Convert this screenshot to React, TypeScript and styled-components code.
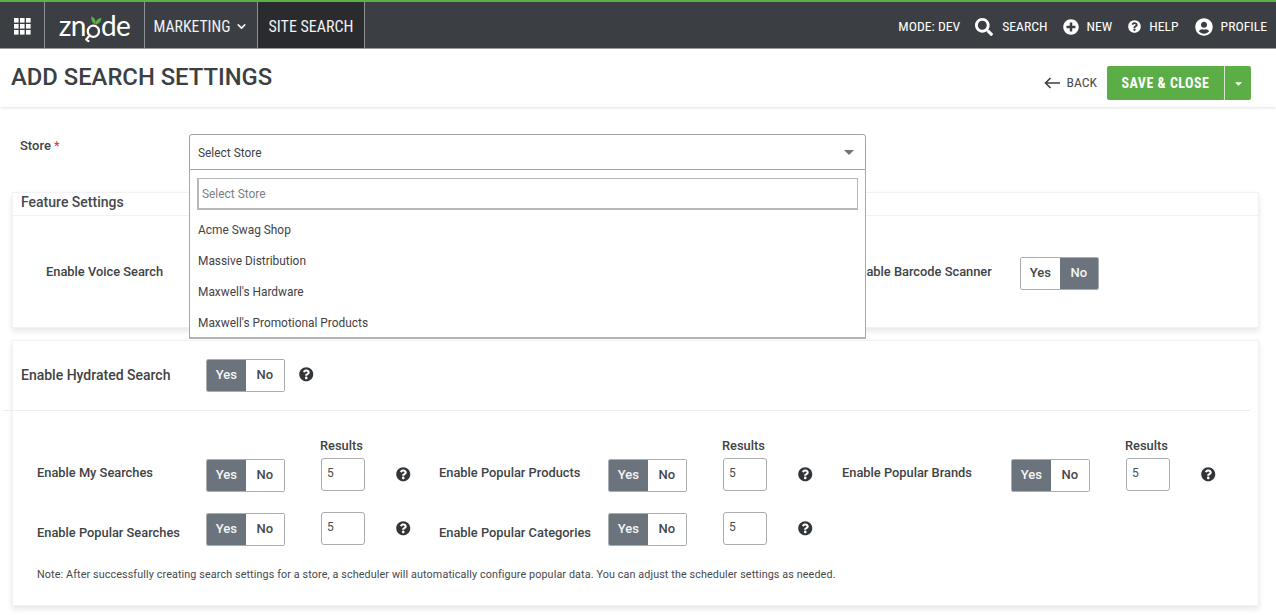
import React from "react";
import styled, { createGlobalStyle } from "styled-components";
import { FaSearch, FaPlusCircle, FaQuestionCircle, FaUserCircle, FaCaretDown } from "react-icons/fa";
import { FiChevronDown } from "react-icons/fi";

const Global = createGlobalStyle`
  html, body, #root { margin: 0; padding: 0; height: 100%; background: #fff; }
  body { font-family: Roboto, "Liberation Sans", sans-serif; color: #3c4043; overflow: hidden; }
  * { box-sizing: border-box; }
`;

const Nav = styled.header`
  display: flex; height: 49px; background: #3b3f43;
  border-top: 2px solid #5db043; border-bottom: 1px solid #9b9d9f;
  color: #f1f2f2;
`;
const NavCell = styled.div<{ $w: number; $active?: boolean }>`
  width: ${p => p.$w}px; display: flex; align-items: center; justify-content: center; gap: 5px; padding-top: 3px;
  border-right: 1px solid #8d9093;
  background: ${p => (p.$active ? "#2a2b2f" : "transparent")};
`;
const NavText = styled.span<{ $size?: number }>`
  font-size: ${p => p.$size ?? 13.7}px; font-stretch: 85%; line-height: 1; white-space: nowrap;
`;
const Logo = styled.div`
  display: flex; align-items: baseline; color: #fff; font-family: Lato, sans-serif; font-size: 28px; line-height: 1;
  letter-spacing: -.5px; margin-top: -3px;
  svg { align-self: flex-end; margin: 0 -1.5px -6px -1.5px; }
`;
const NavRight = styled.div`
  margin-left: auto; display: flex; align-items: center; padding: 3px 9px 0 0;
`;
const NavItem = styled.div<{ $gap?: number; $ml?: number }>`
  display: flex; align-items: center; gap: ${p => p.$gap ?? 8}px; margin-left: ${p => p.$ml ?? 16}px; color: #fff;
`;

const TitleBar = styled.div`
  height: 58px; display: flex; justify-content: space-between; padding: 0 25px 0 11px;
  box-shadow: 0 1px 3px rgba(0,0,0,.12);
`;
const Title = styled.h1`
  margin: 14px 0 0; font-size: 23.8px; font-weight: 500; color: #3c4043; line-height: 28px;
`;
const Actions = styled.div`
  display: flex; align-items: flex-start; padding-top: 17px;
`;
const Back = styled.div`
  display: flex; align-items: center; gap: 6px; height: 34px; margin-right: 10px; color: #4a4d50;
`;
const SaveGroup = styled.div`
  display: flex; height: 34px; background: #5bad45; border-radius: 2px; color: #fff;
`;
const SaveBtn = styled.div`
  width: 118px; display: flex; align-items: center; justify-content: center;
  font-size: 14px; font-weight: 700; font-stretch: 85%; letter-spacing: .5px; border-right: 1px solid #d5e8cf;
`;
const Caret = styled.div`
  width: 26px; display: flex; align-items: center; justify-content: center; font-size: 11px;
`;

const Form = styled.main`
  padding: 0 17px 0 12px;
`;
const StoreRow = styled.div`
  height: 85px; display: flex; padding: 28px 0 0 8px;
`;
const StoreLabel = styled.label`
  width: 169px; font-size: 13px; font-weight: 500; line-height: 22px; color: #3f4346;
  b { color: #d9363e; font-weight: 400; }
`;
const SelectWrap = styled.div`
  position: relative; width: 677px; height: 36px; margin-top: -1px;
`;
const SelectBox = styled.div`
  height: 36px; border: 1px solid #9ea3a7; border-radius: 3px 3px 0 0; display: flex; align-items: center;
  justify-content: space-between; padding: 2px 11px 0 8px; font-size: 11.9px; color: #3f4346; background: #fff;
`;
const Arrow = styled.i`
  width: 0; height: 0; border-left: 5.5px solid transparent; border-right: 5.5px solid transparent;
  border-top: 5px solid #6f7478; margin-top: -2px;
`;
const Menu = styled.div`
  position: absolute; left: 0; right: 0; top: 36px; height: 169px; background: #fff; z-index: 5;
  border: 1px solid #a3a8ac; border-top: 0; border-bottom: 2px solid #b0b4b7; padding: 8px 7px 0;
`;
const MenuSearch = styled.div`
  height: 32px; border: 1px solid #b4b9bc; border-width: 1px 1px 2px 2px; font-size: 11.9px; color: #7b7f83;
  display: flex; align-items: center; padding: 0 3px; margin-bottom: 4px;
`;
const MenuItem = styled.div`
  height: 31px; display: flex; align-items: center; padding-left: 1px; font-size: 11.9px; color: #3f4346;
`;

const Card = styled.section<{ $h: number; $mb?: number }>`
  height: ${p => p.$h}px; margin-bottom: ${p => p.$mb ?? 0}px; background: #fff;
  border: 1px solid #f2f2f2; box-shadow: 0 3px 6px rgba(0,0,0,.1);
`;
const CardHead = styled.div`
  height: 23px; border-bottom: 1px solid #f2f2f2; padding-left: 8px; font-size: 14px; font-weight: 500;
  line-height: 18px; color: #45494c;
`;
const FeatureRow = styled.div`
  display: flex; padding: 41px 0 0 33px; align-items: flex-start;
`;
const FeatureGroup = styled.div<{ $w?: number }>`
  display: flex; align-items: center; width: ${p => (p.$w ? `${p.$w}px` : "auto")};
`;
const Label = styled.span<{ $w: number; $size?: number; $dy?: number }>`
  width: ${p => p.$w}px; font-size: ${p => p.$size ?? 12.85}px; font-weight: 500; color: #3f4346; white-space: nowrap; line-height: 16px;
  margin-top: ${p => p.$dy ?? -3}px;
`;
const Toggle = styled.div`
  display: flex; width: 79px; height: 33px; border: 1px solid #a9adb0; border-radius: 2px; overflow: hidden; flex: none;
`;
const ToggleSide = styled.span<{ $on?: boolean }>`
  flex: 1; display: flex; align-items: center; justify-content: center; font-size: 13px; font-weight: 500; padding-bottom: 2px;
  background: ${p => (p.$on ? "#6b747d" : "#fff")}; color: ${p => (p.$on ? "#f4f5f6" : "#44484b")};
`;
const Hydrated = styled.div`
  height: 70px; display: flex; align-items: flex-start; padding: 18px 0 0 9px;
  margin: 0 8px 0 -10px; border-bottom: 1px solid #eeeeee;
  > div { margin-left: 9px; display: flex; align-items: center; }
`;
const Help = styled.span<{ $ml: number; $size?: number }>`
  display: flex; margin: -2px 0 0 ${p => p.$ml}px; font-size: ${p => p.$size ?? 14.5}px; color: #333639; flex: none;
`;
const Grid = styled.div`
  display: grid; grid-template-columns: 402px 403px 402px; padding: 48px 0 0 24px; row-gap: 21px;
`;
const Option = styled.div`
  display: flex; align-items: center; height: 33px;
`;
const NumberCell = styled.div`
  position: relative; margin-left: 36px; flex: none;
`;
const ResultsLabel = styled.span`
  position: absolute; left: -1px; top: -22px; font-size: 12.85px; font-weight: 500; color: #3f4346; line-height: 16px;
`;
const NumInput = styled.div`
  width: 44px; height: 33px; border: 1px solid #a9adb0; border-radius: 3px; font-size: 12px; color: #4a4d50;
  display: flex; align-items: center; padding: 0 0 3px 5px; margin-top: -2px;
`;
const Note = styled.p`
  margin: 22px 0 0 24px; font-size: 10.75px; letter-spacing: .12px; color: #45494c; line-height: 14px;
`;

const AppsIcon = () => (
  <svg width="17" height="17" viewBox="0 0 17 17" fill="#fff">
    {[0, 6, 12].flatMap(y => [0, 6, 12].map(x => <rect key={`${x}-${y}`} x={x} y={y} width="4.6" height="4.6" />))}
  </svg>
);
const LogoNode = () => (
  <svg width="18" height="29" viewBox="0 0 24 38" fill="none">
    <path d="M15 11C11 9 9 5 10 0c4 2 6.500 6 5 11z" fill="#5db043" />
    <path d="M15.500 11c-.5-4 2-8 7.500-9 .5 4.500-2.500 8-7.500 9z" fill="#5db043" />
    <circle cx="12.500" cy="20" r="7.500" stroke="#fff" strokeWidth="3" />
    <path d="M7.500 25.500L3 31M3 31c1 1.500 2 2 3 2" stroke="#fff" strokeWidth="3" strokeLinecap="round" />
  </svg>
);
const BackArrow = () => (
  <svg width="16" height="12" viewBox="0 0 16 12" fill="none" stroke="#3c4043" strokeWidth="1.600">
    <path d="M16 6H1.500M6.500 1L1.500 6l5 5" />
  </svg>
);

const YesNo = ({ yes }: { yes: boolean }) => (
  <Toggle>
    <ToggleSide $on={yes}>Yes</ToggleSide>
    <ToggleSide $on={!yes}>No</ToggleSide>
  </Toggle>
);

const SearchOption = ({ label, results, dy = -5 }: { label: string; results?: boolean; dy?: number }) => (
  <Option>
    <Label $w={169} $dy={dy}>{label}</Label>
    <YesNo yes />
    <NumberCell>
      {results && <ResultsLabel>Results</ResultsLabel>}
      <NumInput>5</NumInput>
    </NumberCell>
    <Help $ml={31}><FaQuestionCircle /></Help>
  </Option>
);

export default function App() {
  return (
    <>
      <Global />
      <Nav>
        <NavCell $w={45}><AppsIcon /></NavCell>
        <NavCell $w={100}>
          <Logo>zn<LogoNode />de</Logo>
        </NavCell>
        <NavCell $w={113}>
          <NavText $size={15.7}>MARKETING</NavText>
          <FiChevronDown size={13} strokeWidth={3} />
        </NavCell>
        <NavCell $w={107} $active><NavText $size={16}>SITE SEARCH</NavText></NavCell>
        <NavRight>
          <NavItem $ml={0}><NavText>MODE: DEV</NavText></NavItem>
          <NavItem $gap={9} $ml={15}><FaSearch size={18} /><NavText>SEARCH</NavText></NavItem>
          <NavItem $gap={7}><FaPlusCircle size={16} /><NavText>NEW</NavText></NavItem>
          <NavItem><FaQuestionCircle size={13} /><NavText>HELP</NavText></NavItem>
          <NavItem><FaUserCircle size={18} /><NavText>PROFILE</NavText></NavItem>
        </NavRight>
      </Nav>
      <TitleBar>
        <Title>ADD SEARCH SETTINGS</Title>
        <Actions>
          <Back><BackArrow /><NavText>BACK</NavText></Back>
          <SaveGroup>
            <SaveBtn>SAVE &amp; CLOSE</SaveBtn>
            <Caret><FaCaretDown /></Caret>
          </SaveGroup>
        </Actions>
      </TitleBar>
      <Form>
        <StoreRow>
          <StoreLabel>Store <b>*</b></StoreLabel>
          <SelectWrap>
            <SelectBox>Select Store<Arrow /></SelectBox>
            <Menu>
              <MenuSearch>Select Store</MenuSearch>
              <MenuItem>Acme Swag Shop</MenuItem>
              <MenuItem>Massive Distribution</MenuItem>
              <MenuItem>Maxwell's Hardware</MenuItem>
              <MenuItem>Maxwell's Promotional Products</MenuItem>
            </Menu>
          </SelectWrap>
        </StoreRow>
        <Card $h={136} $mb={12}>
          <CardHead>Feature Settings</CardHead>
          <FeatureRow>
            <FeatureGroup $w={806}>
              <Label $w={160}>Enable Voice Search</Label>
              <YesNo yes={false} />
            </FeatureGroup>
            <FeatureGroup>
              <Label $w={168}>Enable Barcode Scanner</Label>
              <YesNo yes={false} />
            </FeatureGroup>
          </FeatureRow>
        </Card>
        <Card $h={266}>
          <Hydrated>
            <div>
              <Label $w={185} $size={14} $dy={-1}>Enable Hydrated Search</Label>
              <YesNo yes />
              <Help $ml={14}><FaQuestionCircle /></Help>
            </div>
          </Hydrated>
          <Grid>
            <SearchOption label="Enable My Searches" results />
            <SearchOption label="Enable Popular Products" results />
            <SearchOption label="Enable Popular Brands" results />
            <SearchOption label="Enable Popular Searches" dy={7} />
            <SearchOption label="Enable Popular Categories" dy={7} />
          </Grid>
          <Note>Note: After successfully creating search settings for a store, a scheduler will automatically configure popular data. You can adjust the scheduler settings as needed.</Note>
        </Card>
      </Form>
    </>
  );
}
